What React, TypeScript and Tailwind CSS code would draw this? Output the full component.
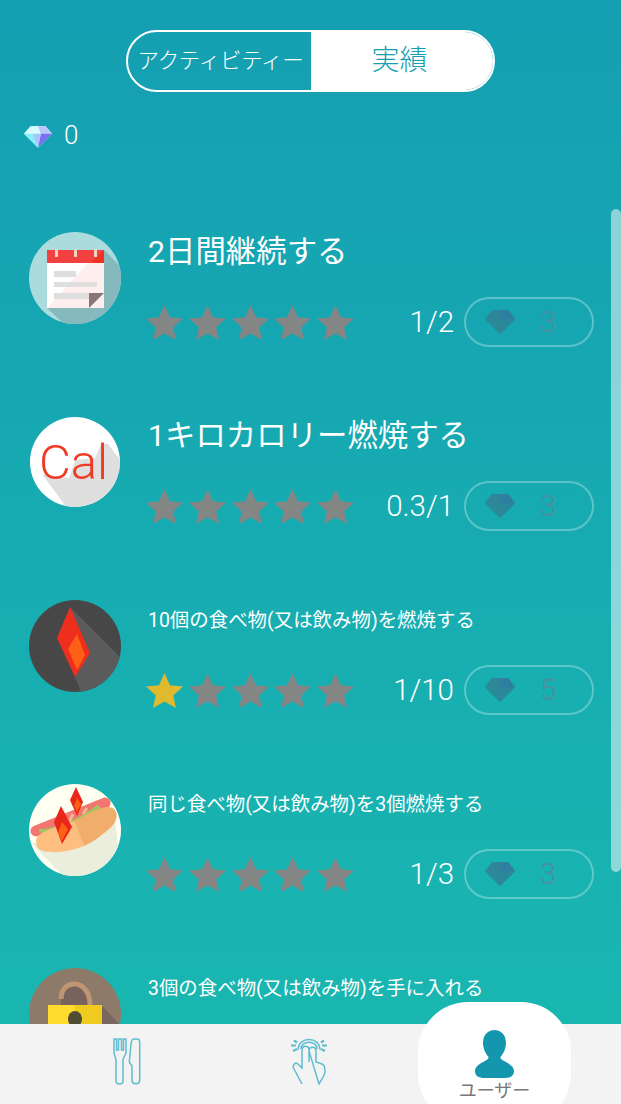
import { useId } from "react";

const jp = "font-['Roboto','Noto_Sans_CJK_JP',sans-serif]";

type Achievement = {
  icon: "calendar" | "cal" | "flame" | "hotdog" | "lock";
  title: string;
  small?: boolean;
  stars?: number;
  progress?: string;
  reward?: number;
};

const rows: Achievement[] = [
  { icon: "calendar", title: "2日間継続する", stars: 0, progress: "1/2", reward: 3 },
  { icon: "cal", title: "1キロカロリー燃焼する", stars: 0, progress: "0.3/1", reward: 3 },
  { icon: "flame", title: "10個の食べ物(又は飲み物)を燃焼する", small: true, stars: 1, progress: "1/10", reward: 5 },
  { icon: "hotdog", title: "同じ食べ物(又は飲み物)を3個燃焼する", small: true, stars: 0, progress: "1/3", reward: 3 },
  // last row is only partly scrolled into view, its stats sit under the tab bar
  { icon: "lock", title: "3個の食べ物(又は飲み物)を手に入れる", small: true },
];

function Star({ on }: { on: boolean }) {
  return (
    <svg viewBox="0 0 38 36" className="w-[37px] h-[35px] shrink-0">
      <path
        d="M19 0l5.6 12.6 13.4 1.4-10 9.2 2.8 12.8L19 29.4 7.2 36 10 23.2 0 14l13.4-1.4z"
        fill={on ? "#dfba2f" : "#848686"}
      />
    </svg>
  );
}

function Gem({ className }: { className: string }) {
  return (
    <svg viewBox="0 0 30 24" className={className}>
      <path d="M7 1h16l7 8-15 15L0 9z" fill="#b5f4fb" />
      <path d="M7 1h16l7 8H0z" fill="#d8fbff" />
      <path d="M15 1h8l7 8H18z" fill="#b9c6fb" />
      <path d="M18 9h12L15 24z" fill="#7d6ff2" />
      <path d="M9 9h9l-3 15z" fill="#a8c4fb" />
      <path d="M0 9h9l6 15z" fill="#8aeefa" />
    </svg>
  );
}

function DullGem() {
  return (
    <svg viewBox="0 0 30 24" className="w-[30px] h-[24px]">
      <path d="M7 0h16l7 9-15 15L0 9z" fill="#2f8699" />
      <path d="M15 0h8l7 9-15 15z" fill="#2e7f9f" />
      <path d="M0 9h30L15 24z" fill="#2a8a97" opacity="0.8" />
    </svg>
  );
}

function RoundIcon({ kind }: { kind: Achievement["icon"] }) {
  const clip = useId();
  return (
    <svg viewBox="0 0 92 92" className="w-[92px] h-[92px] shrink-0">
      <clipPath id={clip}>
        <circle cx="46" cy="46" r={kind === "cal" ? 45 : 46} />
      </clipPath>
      <g clipPath={`url(#${clip})`}>
        {kind === "calendar" && (
          <>
            <rect width="92" height="92" fill="#aadcdd" />
            <path d="M75 18L92 35V92H35L18 76z" fill="#86b9bd" />
            <path d="M18 18h57v58H18z" fill="#ffeeee" />
            <path d="M18 31h41L18 76z" fill="#ffffff" />
            <path d="M18 18h57v13H18z" fill="#f34040" />
            <path d="M62 31L75 18v13z" fill="#f0321e" />
            <path d="M26 17h3v8h-3zM45 17h3v8h-3zM65 17h3v8h-3z" fill="#ecd4c0" />
            <path d="M25 39h22v6H25zM25 50h43v5H25zM25 61h35v6H25z" fill="#dedede" />
            <path d="M60 76V61h15z" fill="#8a7577" />
          </>
        )}
        {kind === "cal" && (
          <>
            <rect width="92" height="92" fill="#ffffff" />
            <path d="M13 58L40 62 46 44 66 42 72 28 79 28 92 45V92H38z" fill="#dfdfdf" />
            <text x="10" y="63" fontSize="49" fontWeight="300" fill="#f03a26" fontFamily="Roboto, sans-serif">
              Cal
            </text>
          </>
        )}
        {kind === "flame" && (
          <>
            <rect width="92" height="92" fill="#474747" />
            <path d="M41 7L92 58V92H52L46 77z" fill="#5b5b5b" />
            <path d="M41 7L61 53 46 77 28 38z" fill="#ee2f1d" />
            <path d="M48 34L56 55 48 70 39 49z" fill="#fd5f16" />
          </>
        )}
        {kind === "hotdog" && (
          <>
            <rect width="92" height="92" fill="#fffff2" />
            <path d="M3 60L85 24 92 92H34z" fill="#eceedd" />
            <path d="M7 47L76 19" fill="none" stroke="#f2756f" strokeWidth="11" strokeLinecap="round" />
            <path d="M10 47C28 47 52 36 70 22" fill="none" stroke="#9dc75e" strokeWidth="4" />
            <path d="M30 40L36 34M40 38L44 30M54 30L58 24" fill="none" stroke="#f0b98a" strokeWidth="3" />
            <path d="M7 56C10 46 30 43 45 37L55 62C38 69 13 71 8 63z" fill="#fdbe7f" />
            <path d="M45 37C58 30 72 22 81 23 91 26 89 38 80 45 72 52 64 58 55 62z" fill="#f0ad6b" />
            <path d="M32 22L43 43 33 60 25 38z" fill="#e8261a" />
            <path d="M33 38L39 45 33 57 29 49z" fill="#fd5f16" />
            <path d="M47 3L54 18 48 32 41 16z" fill="#e8261a" />
            <path d="M48 14L52 20 48 28 45 22z" fill="#fd5f16" />
          </>
        )}
        {kind === "lock" && (
          <>
            <rect width="92" height="92" fill="#8d7a69" />
            <path d="M60 24L92 58V92H72V37z" fill="#7a6660" />
            <path d="M32 31C32 10 61 10 61 37H32z" fill="#77625c" />
            <path d="M32 31C32 10 61 10 61 37" fill="none" stroke="#bf9673" strokeWidth="5" />
            <path d="M19 37h27v55H19z" fill="#ffdc2e" />
            <path d="M46 37h27v55H46z" fill="#efcb1f" />
            <ellipse cx="46" cy="51" rx="7" ry="8" fill="#4f4c35" />
          </>
        )}
      </g>
    </svg>
  );
}

function Row({ item }: { item: Achievement }) {
  return (
    <div className="flex h-[184px] shrink-0 pl-[29px] pr-[27px]">
      <RoundIcon kind={item.icon} />
      <div className="flex-1 pl-[27px] min-w-0">
        <div
          className={`flex items-center h-[39px] text-white whitespace-nowrap ${
            item.small ? "text-[19.45px] pt-[3px]" : "text-[30.4px] pt-[1px]"
          }`}
        >
          {item.title}
        </div>
        {item.progress && (
          <div className="flex items-center mt-[26px] h-[50px]">
            <div className="flex -ml-[2px] gap-[5.75px]">
              {[0, 1, 2, 3, 4].map((n) => (
                <Star key={n} on={n < (item.stars ?? 0)} />
              ))}
            </div>
            <span className="ml-auto mr-[10px] mt-[1px] text-white text-[29.5px] font-light">{item.progress}</span>
            <div className="flex items-center w-[130px] h-[50px] rounded-full border-2 border-white/30 pl-[19px]">
              <DullGem />
              <span className="ml-[25px] text-[29px] font-light leading-none text-[#4d8e9c]">{item.reward}</span>
            </div>
          </div>
        )}
      </div>
    </div>
  );
}

function ForkKnife() {
  return (
    <svg viewBox="0 0 28 47" className="w-[28px] h-[47px]" fill="none" stroke="#5fbccf" strokeWidth="1.5">
      <path d="M1 1V14C1 18 3 19 3 22V43C3 47 10 47 10 43V22C10 19 13 18 13 14V1H10.500V12H8.500V1H5.500V12H3.500V1z" />
      <path d="M21 1H24C26 1 26.700 2 26.700 4V42C26.700 47 19 47 19 42V28L16.300 24 18 6C18.300 3 19 1 21 1z" />
    </svg>
  );
}

function TapHand() {
  return (
    <svg viewBox="0 0 38 47" className="w-[38px] h-[47px]" fill="none" stroke="#5fbccf" strokeWidth="1.5">
      <path d="M8 12C8 -2 30 -2 30 12M11 11C11 2 27 2 27 11" />
      <path d="M12 46L4 31C2 27 5 24 8 26L12 30V12C12 7 19 7 19 12V24M19 13C19 8 26 8 26 13V24L32 26C35 27 35 30 35 33 35 38 31 42 29 46z" />
      <path d="M4 2.500L7 4.500M1 7.500H6M3 13L7 11M34 2.500L31 4.500M37 7.500H32M35 13L31 11" strokeWidth="2.200" />
    </svg>
  );
}

function Person() {
  return (
    <svg viewBox="0 0 39 48" className="w-[39px] h-[48px]">
      <path
        d="M19.500 0C26 0 31 5 31 13 31 19 28 24 25.500 27 25 29 27 30 30 31.500 35 34 39 37 39 41 39 46 35 48 30 48H9C4 48 0 46 0 41 0 37 4 34 9 31.500 12 30 14 29 13.500 27 11 24 8 19 8 13 8 5 13 0 19.500 0z"
        fill="#1596af"
      />
    </svg>
  );
}

export default function App() {
  return (
    <div className={`relative w-[621px] h-[1104px] overflow-hidden flex flex-col bg-gradient-to-b from-[#159fb2] to-[#1ab8b0] ${jp}`}>
      {/* Activity / achievements switch */}
      <div className="flex justify-center pt-[30px] shrink-0">
        <div className="flex w-[369px] h-[62px] rounded-full border-2 border-white overflow-hidden">
          <div className="flex flex-1 items-center justify-center pl-[2px] text-white text-[21.5px] font-light whitespace-nowrap tracking-[-0.3px]">
            アクティビティー
          </div>
          <div className="flex w-[182px] items-center justify-center pr-[5px] bg-white text-[#159fb2] text-[28px] font-light">
            実績
          </div>
        </div>
      </div>

      <div className="flex items-center h-[36px] mt-[26px] pl-[24px] gap-[12px] shrink-0">
        <Gem className="w-[28px] h-[23px]" />
        <span className="text-white text-[26px] font-light leading-none -mt-[2px]">0</span>
      </div>

      <div className="flex flex-col pt-[78px] flex-1 min-h-0 overflow-hidden">
        {rows.map((item) => (
          <Row key={item.title} item={item} />
        ))}
      </div>

      {/* scroll indicator */}
      <div className="absolute right-0 top-[209px] h-[663px] w-[10px] rounded-full bg-white/50" />

      <nav className="relative flex h-[80px] shrink-0 bg-[#f3f3f3] pl-[113px] pt-[14px] gap-[149px] items-start">
        <ForkKnife />
        <TapHand />
        <div className="absolute left-[418px] top-[-22px] w-[153px] h-[122px] rounded-[50px] bg-white flex flex-col items-center pt-[28px]">
          <Person />
          <span className="mt-[3px] text-[18px] leading-[20px] text-[#777777] whitespace-nowrap">ユーザー</span>
        </div>
      </nav>
    </div>
  );
}
